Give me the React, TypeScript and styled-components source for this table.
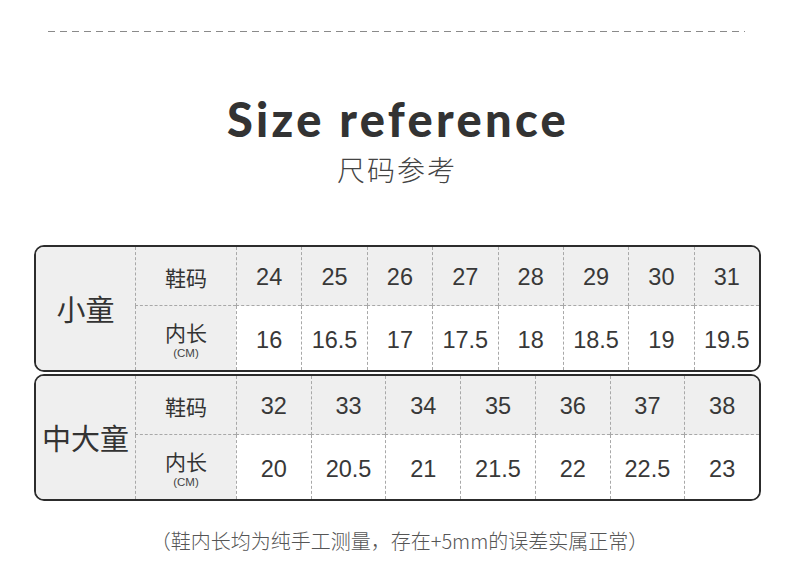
import React from "react";
import styled, { createGlobalStyle } from "styled-components";

const GlobalStyle = createGlobalStyle`
  html, body { margin: 0; padding: 0; background: #fff; }
  body { font-family: "Liberation Sans", "Noto Sans CJK SC", sans-serif; color: #333; }
`;

const Page = styled.div`
  width: 790px;
  height: 584px;
  display: flex;
  flex-direction: column;
  align-items: center;
  overflow: hidden;
`;

const TopRule = styled.div`
  margin-top: 31px;
  margin-left: 3px;
  width: 697px;
  height: 1px;
  background: repeating-linear-gradient(to right, #8a8a8a 0 7px, transparent 7px 12px);
`;

const Title = styled.h1`
  margin: 64px 0 0 6px;
  font-family: "Lato", "Liberation Sans", sans-serif;
  font-weight: 900;
  font-size: 47px;
  line-height: 47px;
  letter-spacing: 3.3px;
  color: #333;
`;

const Subtitle = styled.div`
  margin-top: 10px;
  margin-left: 4px;
  font-family: "Noto Sans CJK SC", sans-serif;
  font-weight: 300;
  font-size: 28px;
  line-height: 32px;
  letter-spacing: 2px;
  color: #444;
`;

const Tables = styled.div`
  align-self: stretch;
  margin: 60px 29px 0 34px;
  display: flex;
  flex-direction: column;
  gap: 2px;
`;

const Card = styled.div<{ $cols: number }>`
  display: grid;
  grid-template-columns: 99px 101px repeat(${(p) => p.$cols}, 1fr);
  grid-template-rows: 59px 64px;
  border: 2px solid #2c2c2c;
  border-radius: 10px;
  overflow: hidden;
  background: #fff;
`;

const GroupLabel = styled.div`
  grid-row: 1 / span 2;
  display: flex;
  align-items: center;
  justify-content: center;
  background: #efefef;
  font-family: "Noto Sans CJK SC", sans-serif;
  font-size: 29px;
  color: #333;
  padding-bottom: 2px;
`;

const Cell = styled.div<{ $head?: boolean; $grey?: boolean }>`
  display: flex;
  flex-direction: column;
  align-items: center;
  justify-content: center;
  border-left: 1px dashed #a8a8a8;
  border-bottom: ${(p) => (p.$head ? "1px dashed #a8a8a8" : "none")};
  background: ${(p) => (p.$head || p.$grey ? "#efefef" : "#fff")};
  font-size: 23.5px;
  color: #383838;
  padding-top: ${(p) => (p.$head ? "3px" : "4px")};
`;

const RowName = styled.span`
  font-family: "Noto Sans CJK SC", sans-serif;
  font-size: 21px;
  line-height: 21px;
  color: #333;
`;

const Unit = styled.span`
  margin-top: 4px;
  font-family: "Liberation Sans", sans-serif;
  font-size: 11.5px;
  line-height: 12px;
  color: #444;
`;

const Footer = styled.div`
  margin-top: 28px;
  margin-left: 9px;
  font-family: "Noto Sans CJK SC", sans-serif;
  font-size: 20px;
  line-height: 24px;
  font-weight: 300;
  color: #555;
`;

type Group = { name: string; sizes: string[]; lengths: string[] };

const groups: Group[] = [
  {
    name: "小童",
    sizes: ["24", "25", "26", "27", "28", "29", "30", "31"],
    lengths: ["16", "16.5", "17", "17.5", "18", "18.5", "19", "19.5"],
  },
  {
    name: "中大童",
    sizes: ["32", "33", "34", "35", "36", "37", "38"],
    lengths: ["20", "20.5", "21", "21.5", "22", "22.5", "23"],
  },
];

function SizeTable({ g }: { g: Group }) {
  return (
    <Card $cols={g.sizes.length}>
      <GroupLabel>{g.name}</GroupLabel>
      <Cell $head>
        <RowName>鞋码</RowName>
      </Cell>
      {g.sizes.map((s) => (
        <Cell $head key={"s" + s}>
          {s}
        </Cell>
      ))}
      <Cell $grey>
        <RowName>内长</RowName>
        <Unit>(CM)</Unit>
      </Cell>
      {g.lengths.map((l) => (
        <Cell key={"l" + l}>{l}</Cell>
      ))}
    </Card>
  );
}

export default function App() {
  return (
    <Page>
      <GlobalStyle />
      <TopRule />
      <Title>Size reference</Title>
      <Subtitle>尺码参考</Subtitle>
      <Tables>
        {groups.map((g) => (
          <SizeTable key={g.name} g={g} />
        ))}
      </Tables>
      <Footer>（鞋内长均为纯手工测量，存在+5mm的误差实属正常）</Footer>
    </Page>
  );
}
